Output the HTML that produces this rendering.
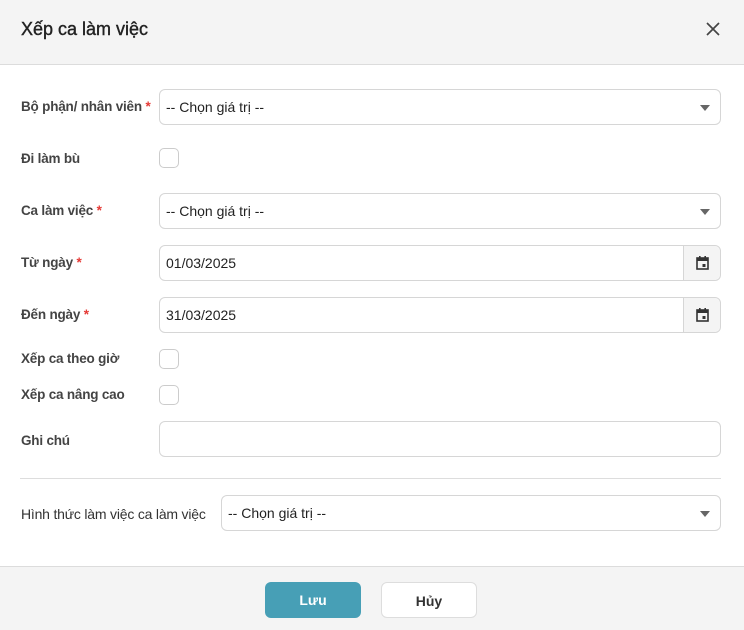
<!DOCTYPE html><html><head><meta charset="utf-8"><style>
*{box-sizing:border-box;margin:0;padding:0}
body{width:744px;height:630px;background:#fff;font-family:"Liberation Sans",Arial,sans-serif;position:relative;overflow:hidden;color:#333}
.hd{position:absolute;left:0;top:0;width:744px;height:65px;background:#f4f4f4;border-bottom:1px solid #dcdcdc}
.hd h1{position:absolute;left:21px;top:19px;font-size:18px;font-weight:normal;color:#222;-webkit-text-stroke:0.4px #222}
.x{position:absolute;left:705px;top:21px}
.lb{position:absolute;left:21px;font-size:13.5px;color:#444;font-weight:bold;letter-spacing:-0.2px}
.lb span{color:#e53935}
.in{position:absolute;left:159px;width:562px;height:36px;border:1px solid #d6d6d6;border-radius:6px;font-size:14px;color:#222;padding:9px 6px;background:#fff}
.arr{position:absolute;right:10px;top:15px;width:0;height:0;border-left:5px solid transparent;border-right:5px solid transparent;border-top:6px solid #666}
.cal{position:absolute;right:0;top:0;width:37px;height:34px;background:#f4f4f4;border-left:1px solid #d6d6d6;border-radius:0 6px 6px 0}
.cb{position:absolute;left:159px;width:20px;height:20px;border:1px solid #ccc;border-radius:5px}
.btn{position:absolute;top:582px;width:96px;height:36px;border-radius:6px;font-size:14px;font-weight:bold;text-align:center;line-height:36px}
</style></head><body>
<div class="hd"><h1>Xếp ca làm việc</h1>
<svg class="x" width="16" height="16" viewBox="0 0 16 16"><path d="M2 2L14 14M14 2L2 14" stroke="#444" stroke-width="1.7"/></svg></div>
<div class="lb" style="top:99px">Bộ phận/ nhân viên <span>*</span></div>
<div class="in" style="top:89px">-- Chọn giá trị --<div class="arr"></div></div>
<div class="lb" style="top:151px">Đi làm bù</div>
<div class="cb" style="top:148px"></div>
<div class="lb" style="top:203px">Ca làm việc <span>*</span></div>
<div class="in" style="top:193px">-- Chọn giá trị --<div class="arr"></div></div>
<div class="lb" style="top:255px">Từ ngày <span>*</span></div>
<div class="in" style="top:245px">01/03/2025<div class="cal"><svg style="position:absolute;left:12px;top:10px" width="13" height="14" viewBox="0 0 13 14"><rect x="1" y="2" width="11" height="11" fill="none" stroke="#333" stroke-width="1.6"/><rect x="1" y="2" width="11" height="3" fill="#333"/><rect x="3" y="0" width="1.6" height="3" fill="#333"/><rect x="8.4" y="0" width="1.6" height="3" fill="#333"/><rect x="6.5" y="8" width="3" height="3" fill="#333"/></svg></div></div>
<div class="lb" style="top:307px">Đến ngày <span>*</span></div>
<div class="in" style="top:297px">31/03/2025<div class="cal"><svg style="position:absolute;left:12px;top:10px" width="13" height="14" viewBox="0 0 13 14"><rect x="1" y="2" width="11" height="11" fill="none" stroke="#333" stroke-width="1.6"/><rect x="1" y="2" width="11" height="3" fill="#333"/><rect x="3" y="0" width="1.6" height="3" fill="#333"/><rect x="8.4" y="0" width="1.6" height="3" fill="#333"/><rect x="6.5" y="8" width="3" height="3" fill="#333"/></svg></div></div>
<div class="lb" style="top:351px">Xếp ca theo giờ</div>
<div class="cb" style="top:349px"></div>
<div class="lb" style="top:387px">Xếp ca nâng cao</div>
<div class="cb" style="top:385px"></div>
<div class="lb" style="top:433px">Ghi chú</div>
<div class="in" style="top:421px"></div>
<div style="position:absolute;left:20px;top:478px;width:701px;height:1px;background:#ddd"></div>
<div class="lb" style="top:506px;font-weight:normal;font-size:14px;color:#333">Hình thức làm việc ca làm việc</div>
<div class="in" style="top:495px;left:221px;width:500px">-- Chọn giá trị --<div class="arr"></div></div>
<div style="position:absolute;left:0;top:566px;width:744px;height:64px;background:#f4f4f4;border-top:1px solid #dcdcdc"></div>
<div class="btn" style="left:265px;background:#479fb6;color:#fff">Lưu</div>
<div class="btn" style="left:381px;background:#fff;border:1px solid #ddd;color:#333">Hủy</div>
</body></html>
